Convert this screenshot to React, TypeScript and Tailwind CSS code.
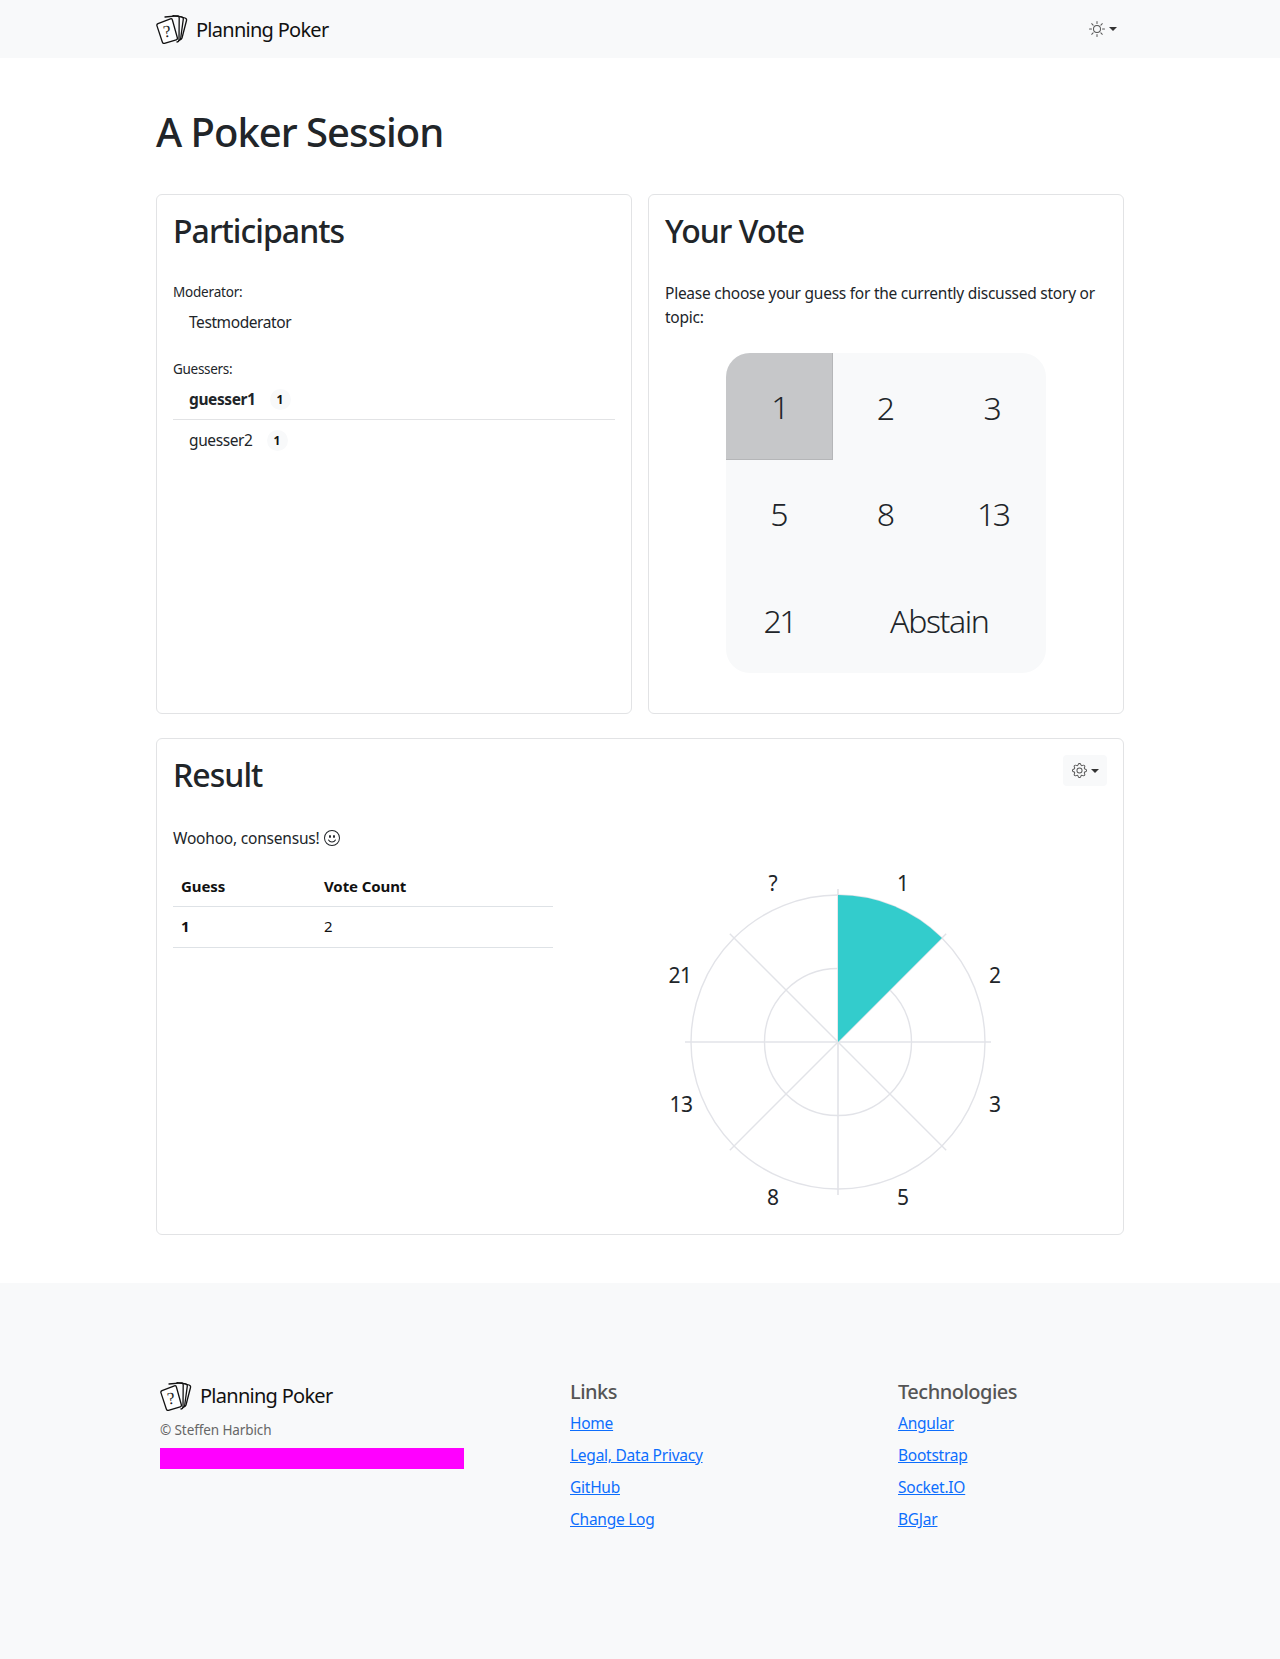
import React from "react";
import { BsGear, BsSun, BsEmojiSmile } from "react-icons/bs";

const font = "font-['Noto_Sans','Open_Sans',sans-serif]";

function Logo({ className }: { className: string }) {
  return (
    <svg viewBox="0 0 32 30" className={className} fill="none" stroke="#111" strokeWidth="1.3" strokeLinejoin="round" strokeLinecap="round">
      <path d="M22 2 L29 4 Q31 4.8 30.5 6.5 L26 24 Q25.5 25.5 24 25.5" />
      <path d="M17 1.6 L25.5 2.8 Q27.5 3.2 27.3 5.2 L24.6 25 Q24.3 26.6 22.8 26.6" />
      <path d="M9 3 L21 1.8 Q23 1.8 23.2 3.8 L23 26.4 Q22.8 27.8 21 28" />
      <path fill="#fff" d="M2 9.6 L14.4 4.8 Q16 4.3 16.4 6 L21.4 24 Q21.6 25.4 20.2 25.8 L8.4 29.4 Q6.8 29.8 6.4 28.2 L0.9 11.6 Q0.6 10.2 2 9.6 Z" />
      <text x="7.2" y="23" fontSize="17" fill="#222" stroke="none" fontFamily="'Liberation Serif',serif" transform="rotate(-8 11 17)">?</text>
    </svg>
  );
}

function Caret() {
  return <span className="inline-block ml-1 border-x-[4.5px] border-t-[4.5px] border-x-transparent border-t-[#333]" />;
}

function Card({ title, className, children }: { title: string; className?: string; children: React.ReactNode }) {
  return (
    <div className={`border border-[#e2e3e5] rounded-md bg-white p-4 ${className ?? ""}`}>
      <h2 className="pt-[1px] text-[32px] leading-[38px] font-medium text-[#212529] tracking-[-0.95px]">{title}</h2>
      {children}
    </div>
  );
}

function Badge({ className }: { className?: string }) {
  return (
    <span className={`inline-flex items-center justify-center w-[21px] h-[21px] rounded-full bg-[#f8f9fa] text-[12px] font-bold text-[#111] ${className ?? ""}`}>1</span>
  );
}

const cells = ["1", "2", "3", "5", "8", "13", "21"];

const labels: [string, number, number][] = [
  ["1", 903, 883],
  ["2", 995, 975],
  ["3", 995, 1104],
  ["5", 903, 1197],
  ["8", 773, 1197],
  ["13", 681, 1104],
  ["21", 680, 975],
  ["?", 773, 883],
];

function Chart() {
  const ox = 638;
  const oy = 860;
  const cx = 838 - ox;
  const cy = 1042 - oy;
  const r = 147;
  const e = 153;
  const d = e * Math.SQRT1_2;
  const w = r * Math.SQRT1_2;
  return (
    <svg width="400" height="370" className="block">
      <g stroke="#e2e3e8" fill="none" strokeWidth="1.4">
        <circle cx={cx} cy={cy} r={r} />
        <circle cx={cx} cy={cy} r={73.5} />
        <line x1={cx - e} y1={cy} x2={cx + e} y2={cy} strokeWidth="1.6" />
        <line x1={cx} y1={cy - e} x2={cx} y2={cy + e} strokeWidth="1.6" />
        <line x1={cx - d} y1={cy - d} x2={cx + d} y2={cy + d} />
        <line x1={cx - d} y1={cy + d} x2={cx + d} y2={cy - d} />
      </g>
      <path d={`M${cx} ${cy} L${cx} ${cy - r} A${r} ${r} 0 0 1 ${cx + w} ${cy - w} Z`} fill="#33cccc" />
      {labels.map(([t, x, y]) => (
        <text key={t} x={x - ox} y={y - oy + 7.5} textAnchor="middle" fontSize="21" fill="#212529" fontFamily="'Noto Sans',sans-serif" letterSpacing={t.length > 1 ? "-0.5" : "0"}>
          {t}
        </text>
      ))}
    </svg>
  );
}

function FootCol({ title, links, className }: { title: string; links: string[]; className: string }) {
  return (
    <div className={className}>
      <h5 className="text-[20px] leading-[24px] font-medium text-[#555] tracking-[-0.5px]">{title}</h5>
      <ul className="mt-[7px] flex flex-col gap-[8px]">
        {links.map((l) => (
          <li key={l} className="leading-[24px]">
            <a href="#" className="text-[#0d6efd] underline text-[15.5px] tracking-[-0.25px]">{l}</a>
          </li>
        ))}
      </ul>
    </div>
  );
}

export default function App() {
  return (
    <div className={`${font} text-[#212529] bg-white min-h-[1659px] flex flex-col text-[16px]`}>
      <nav className="h-[58px] bg-[#f8f9fa] shrink-0">
        <div className="w-[968px] mx-auto h-full flex items-center justify-between">
          <div className="flex items-center gap-[8px]">
            <Logo className="w-[32px] h-[30px]" />
            <span className="pt-[2px] text-[20px] text-[#111] tracking-[-0.73px]">Planning Poker</span>
          </div>
          <div className="flex items-center mr-[7px] text-[#555]">
            <BsSun className="w-[16px] h-[16px]" />
            <Caret />
          </div>
        </div>
      </nav>

      <main className="w-[968px] mx-auto">
        <h1 className="mt-[46px] text-[40px] leading-[56px] font-medium tracking-[-1px]">A Poker Session</h1>

        <div className="mt-[34px] grid grid-cols-2 gap-[16px]">
          <Card title="Participants" className="h-[520px]">
            <div className="mt-[32px] text-[13.5px] leading-[20px] tracking-[-0.2px]">Moderator:</div>
            <div className="pl-[16px] mt-[8px] leading-[24px] text-[15.5px] tracking-[-0.42px]">Testmoderator</div>
            <div className="mt-[25px] text-[13.5px] leading-[20px] tracking-[-0.3px]">Guessers:</div>
            <ul className="text-[15.5px] tracking-[-0.4px]">
              <li className="h-[41px] pl-[16px] pt-[1px] flex items-center border-b border-[#e2e3e5] font-bold">
                guesser1
                <Badge className="ml-[14px] tracking-normal" />
              </li>
              <li className="h-[41px] pl-[16px] flex items-center">
                guesser2
                <Badge className="ml-[14px] tracking-normal" />
              </li>
            </ul>
          </Card>

          <Card title="Your Vote" className="h-[520px]">
            <p className="mt-[31px] text-[15.5px] leading-[24px] tracking-[-0.25px]">
              Please choose your guess for the currently discussed story or topic:
            </p>
            <div className="mt-[24px] mx-auto w-[320px] h-[320px] rounded-[24px] bg-[#f8f9fa] overflow-hidden grid grid-cols-3 grid-rows-3">
              {cells.map((c) => (
                <div
                  key={c}
                  className={`flex items-center justify-center pt-[3px] text-[32px] font-light ${
                    c.length > 1 ? "tracking-[-2.5px]" : ""
                  } ${c === "1" ? "pl-[3px] bg-[#c6c7c9] border-r border-b border-[#b5b6b8]" : ""}`}
                >
                  {c}
                </div>
              ))}
              <div className="col-span-2 flex items-center justify-center pt-[3px] text-[32px] font-light tracking-[-1.4px]">Abstain</div>
            </div>
          </Card>
        </div>

        <div className="mt-[24px] relative border border-[#e2e3e5] rounded-md p-4 h-[497px]">
          <h2 className="pt-[1px] text-[32px] leading-[38px] font-medium tracking-[-0.95px]">Result</h2>
          <button className="absolute right-[16px] top-[16px] w-[44px] h-[31px] rounded bg-[#f8f9fa] flex items-center justify-center text-[#555]">
            <BsGear className="w-[15px] h-[15px]" />
            <Caret />
          </button>
          <p className="mt-[32px] leading-[24px] flex items-center text-[15.5px] tracking-[-0.2px]">
            Woohoo, consensus!
            <BsEmojiSmile className="ml-[4px] w-[16px] h-[16px]" />
          </p>
          <div className="flex">
            <table className="mt-[16px] w-[380px] h-fit border-collapse text-[15px] text-[#111] tracking-[-0.1px] self-start shrink-0">
              <thead>
                <tr className="h-[40px] border-b border-[#dee2e6]">
                  <th className="w-[143px] text-left font-bold pl-[8px]">Guess</th>
                  <th className="text-left font-bold pl-[8px]">Vote Count</th>
                </tr>
              </thead>
              <tbody>
                <tr className="h-[41px] border-b border-[#dee2e6]">
                  <th className="text-left font-bold pl-[8px]">1</th>
                  <td className="pl-[8px]">2</td>
                </tr>
              </tbody>
            </table>
            <div className="ml-[85px] mt-[10px]">
              <Chart />
            </div>
          </div>
        </div>
      </main>

      <footer className="mt-[48px] flex-1 bg-[#f8f9fa] pt-[97px]">
        <div className="w-[968px] mx-auto flex">
          <div className="w-[414px] pl-[4px]">
            <div className="flex items-center gap-[8px]">
              <Logo className="w-[32px] h-[30px]" />
              <span className="pt-[1px] text-[20px] text-[#111] tracking-[-0.73px]">Planning Poker</span>
            </div>
            <div className="mt-[9px] text-[13.5px] leading-[20px] text-[#666] tracking-[-0.1px]">© Steffen Harbich</div>
            <div className="mt-[8px] w-[304px] h-[21px] bg-[#ff00ff]" />
          </div>
          <FootCol title="Links" className="w-[328px]" links={["Home", "Legal, Data Privacy", "GitHub", "Change Log"]} />
          <FootCol title="Technologies" className="flex-1" links={["Angular", "Bootstrap", "Socket.IO", "BGJar"]} />
        </div>
      </footer>
    </div>
  );
}
